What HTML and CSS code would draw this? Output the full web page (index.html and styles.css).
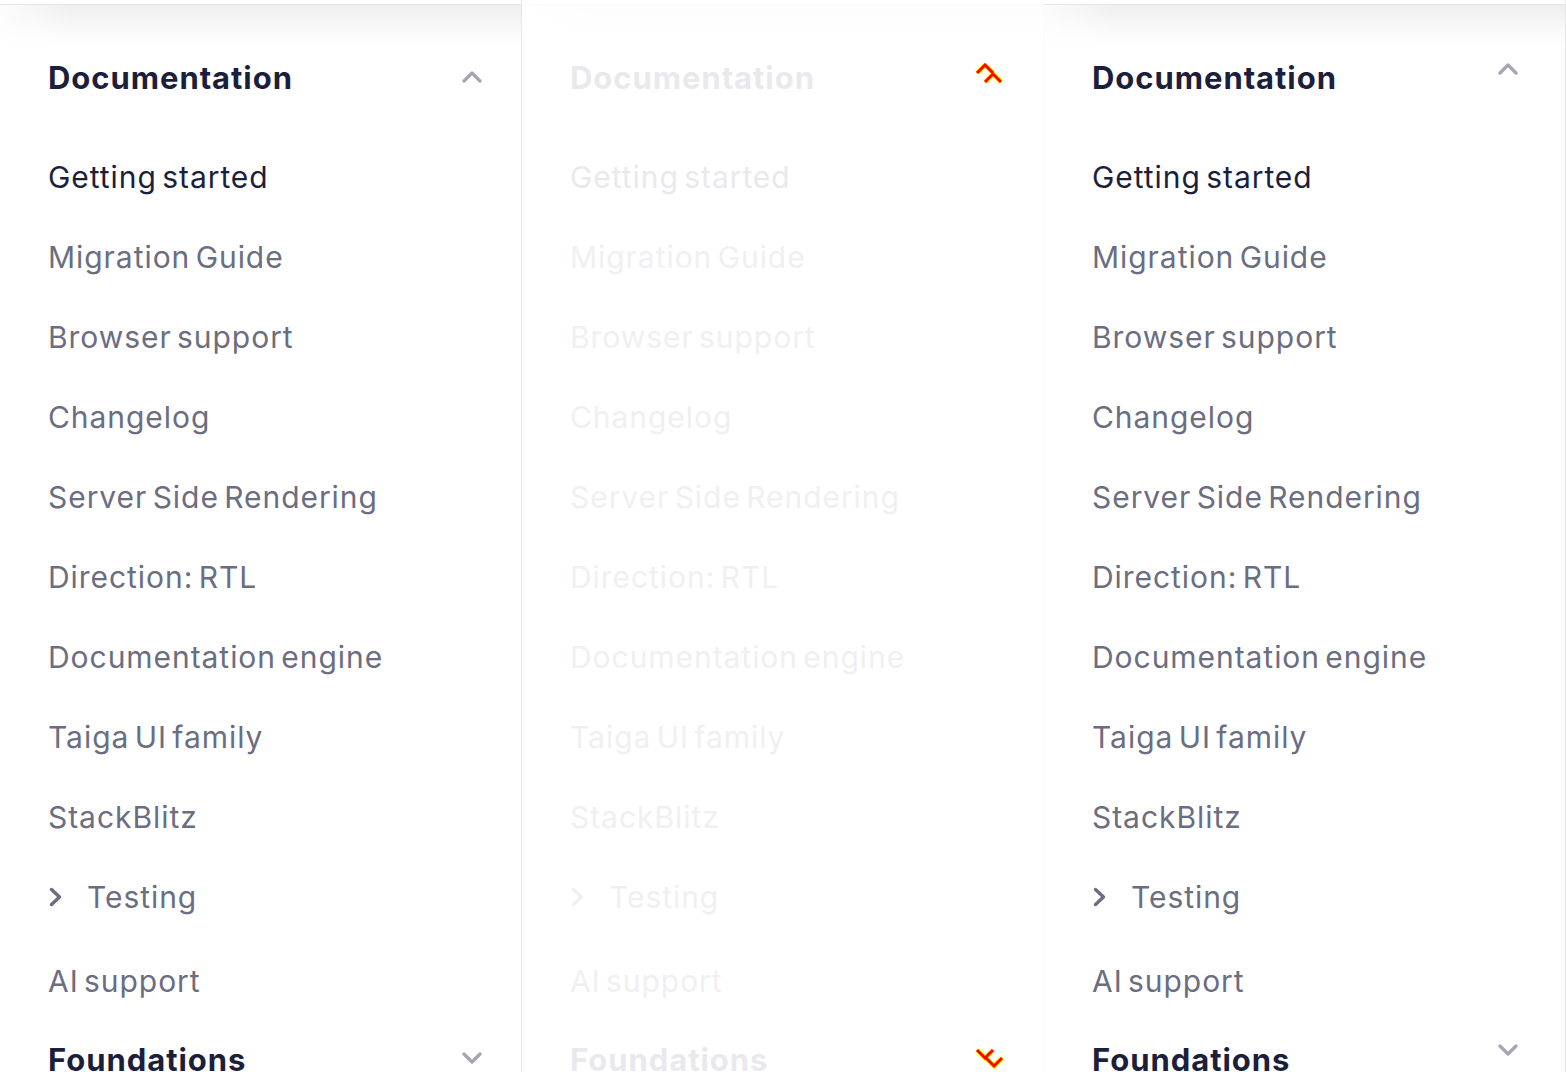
FILE: index.html
```html
<!DOCTYPE html>
<html lang="en">
<head>
<meta charset="utf-8">
<title>Documentation navigation diff</title>
<link rel="stylesheet" href="styles.css">
</head>
<body>
<div class="frame">

  <section class="panel panel-left">
    <div class="shade"><div class="shade-fill"></div></div>
    <div class="group-head">
      <span class="group-title">Documentation</span>
      <svg class="chev" width="20" height="13" viewBox="0 0 20 13"><polyline points="2,11 10,3 18,11"/></svg>
    </div>
    <ul class="items">
      <li class="item item-active">Getting started</li>
      <li class="item">Migration Guide</li>
      <li class="item">Browser support</li>
      <li class="item">Changelog</li>
      <li class="item">Server Side Rendering</li>
      <li class="item">Direction: RTL</li>
      <li class="item">Documentation engine</li>
      <li class="item">Taiga UI family</li>
      <li class="item">StackBlitz</li>
      <li class="item item-sub"><svg class="sub-chev" width="14" height="20" viewBox="0 0 14 20"><polyline points="2.5,2.5 10.5,10 2.5,17.5"/></svg>Testing</li>
      <li class="item item-ai">AI support</li>
    </ul>
    <div class="group-head group-foot">
      <span class="group-title">Foundations</span>
      <svg class="chev" width="20" height="13" viewBox="0 0 20 13"><polyline points="2,2 10,10 18,2"/></svg>
    </div>
  </section>

  <section class="panel panel-mid">
    <div class="shade"><div class="shade-fill"></div></div>
    <div class="group-head">
      <span class="group-title">Documentation</span>
      <svg class="diff" width="30" height="22" viewBox="0 0 30 22">
        <polyline class="diff-edge" points="2,10 10,2 18,10"/>
        <polyline class="diff-edge" points="10,19 18,11 26,19"/>
        <polyline class="diff-core" points="2,10 10,2 18,10"/>
        <polyline class="diff-core" points="10,19 18,11 26,19"/>
      </svg>
    </div>
    <ul class="items">
      <li class="item item-active">Getting started</li>
      <li class="item">Migration Guide</li>
      <li class="item">Browser support</li>
      <li class="item">Changelog</li>
      <li class="item">Server Side Rendering</li>
      <li class="item">Direction: RTL</li>
      <li class="item">Documentation engine</li>
      <li class="item">Taiga UI family</li>
      <li class="item">StackBlitz</li>
      <li class="item item-sub"><svg class="sub-chev" width="14" height="20" viewBox="0 0 14 20"><polyline points="2.5,2.5 10.5,10 2.5,17.5"/></svg>Testing</li>
      <li class="item item-ai">AI support</li>
    </ul>
    <div class="group-head group-foot">
      <span class="group-title">Foundations</span>
      <svg class="diff diff-down" width="30" height="22" viewBox="0 0 30 22">
        <polyline class="diff-edge" points="2,2 10,10 18,2"/>
        <polyline class="diff-edge" points="11,10 19,18 27,10"/>
        <polyline class="diff-core" points="2,2 10,10 18,2"/>
        <polyline class="diff-core" points="11,10 19,18 27,10"/>
      </svg>
    </div>
  </section>

  <section class="panel panel-right">
    <div class="shade"><div class="shade-fill"></div></div>
    <div class="group-head">
      <span class="group-title">Documentation</span>
      <svg class="chev chev-shift" width="20" height="13" viewBox="0 0 20 13"><polyline points="2,11 10,3 18,11"/></svg>
    </div>
    <ul class="items">
      <li class="item item-active">Getting started</li>
      <li class="item">Migration Guide</li>
      <li class="item">Browser support</li>
      <li class="item">Changelog</li>
      <li class="item">Server Side Rendering</li>
      <li class="item">Direction: RTL</li>
      <li class="item">Documentation engine</li>
      <li class="item">Taiga UI family</li>
      <li class="item">StackBlitz</li>
      <li class="item item-sub"><svg class="sub-chev" width="14" height="20" viewBox="0 0 14 20"><polyline points="2.5,2.5 10.5,10 2.5,17.5"/></svg>Testing</li>
      <li class="item item-ai">AI support</li>
    </ul>
    <div class="group-head group-foot">
      <span class="group-title">Foundations</span>
      <svg class="chev chev-shift" width="20" height="13" viewBox="0 0 20 13"><polyline points="2,2 10,10 18,2"/></svg>
    </div>
  </section>

</div>
</body>
</html>
```

FILE: styles.css
```css
html, body {
  margin: 0;
  padding: 0;
  background: #ffffff;
}

body {
  font-family: Inter, "Noto Sans", "Liberation Sans", sans-serif;
  color: #1b1f3b;
  overflow: hidden;
}

.frame {
  display: flex;
  width: 1566px;
  height: 1072px;
  overflow: hidden;
}

.panel {
  width: 521px;
  height: 1072px;
  border-right: 1px solid #e7e7ea;
  padding-top: 4px;
  box-sizing: content-box;
  overflow: hidden;
}

.panel-mid {
  border-right-color: #fafafb;
}

.shade {
  height: 33px;
  border-top: 1px solid #e6e6e8;
}

.shade-fill {
  height: 40px;
  background: linear-gradient(to bottom, rgba(20, 20, 40, 0.07), rgba(20, 20, 40, 0));
  -webkit-mask-image: linear-gradient(to right, rgba(0,0,0,0.2), #000 70px);
  mask-image: linear-gradient(to right, rgba(0,0,0,0.2), #000 70px);
}

.panel-mid .shade {
  border-top-color: #fbfbfb;
}

.panel-mid .shade-fill {
  opacity: 0.15;
}

.group-head {
  height: 80px;
  margin-top: -1px;
  display: flex;
  align-items: center;
  justify-content: space-between;
  padding: 0 39px 0 48px;
}

.panel-right .group-head {
  padding-right: 47px;
}

.group-title {
  font-size: 31px;
  font-weight: 700;
  letter-spacing: 0.95px;
  color: #1b1f3b;
}

.chev {
  fill: none;
  stroke: #a5a6b2;
  stroke-width: 3.2;
  stroke-linecap: round;
  stroke-linejoin: round;
  margin-bottom: 2px;
}

.chev-shift {
  margin-bottom: 17px;
}

.items {
  list-style: none;
  margin: 20px 0 0 0;
  padding: 0 0 0 48px;
}

.item {
  height: 80px;
  display: flex;
  align-items: center;
  font-size: 30px;
  letter-spacing: 0.95px;
  word-spacing: -4px;
  color: #6b6d80;
}

.item-active {
  color: #1b1f3b;
}

.item-sub {
  gap: 24px;
}

.sub-chev {
  fill: none;
  stroke: #6b6d80;
  stroke-width: 3.4;
  stroke-linecap: round;
  stroke-linejoin: round;
  margin-left: 1px;
}

.item-ai {
  margin-top: 4px;
}

.group-foot {
  height: 78px;
}

.panel-mid .group-title {
  color: #e9e9ed;
}

.panel-mid .item {
  color: #f0f0f2;
}

.panel-mid .item-active {
  color: #e9e9ed;
}

.panel-mid .sub-chev {
  stroke: #f0f0f2;
}

.diff {
  fill: none;
  stroke-linecap: butt;
  stroke-linejoin: miter;
  margin-right: -1px;
  margin-bottom: 7px;
}

.diff-down {
  margin-bottom: 0;
}

.diff-edge {
  stroke: #ffff00;
  stroke-width: 5;
}

.diff-core {
  stroke: #ff0000;
  stroke-width: 3;
}
```
